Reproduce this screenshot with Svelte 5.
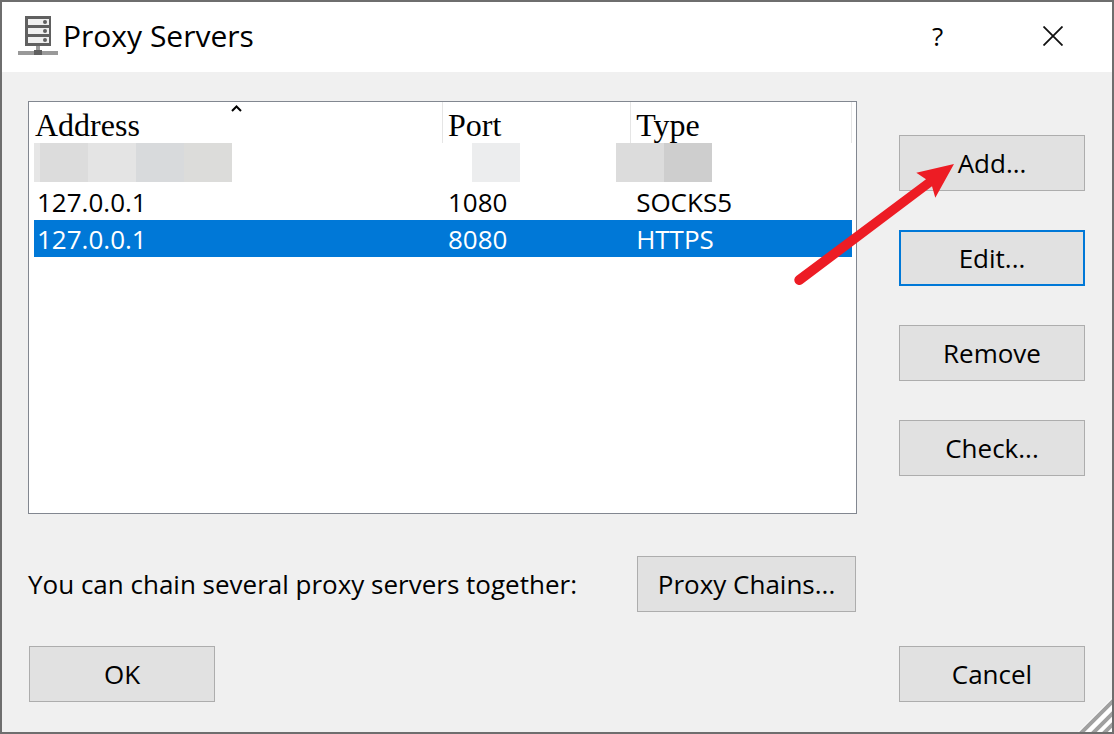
<script>
  const columns = ['Address', 'Port', 'Type'];
  const masked = [
    ['#e6e6e6', '#dcdcdc', '#e4e4e4', '#d8dadc', '#dcdcda'],
    ['#ecedee'],
    ['#dcdcdc', '#cecece'],
  ];
  const servers = [
    ['127.0.0.1', '1080', 'SOCKS5'],
    ['127.0.0.1', '8080', 'HTTPS'],
  ];
  let selected = $state(1);
</script>

<div class="dialog">
  <header>
    <svg class="logo" width="40" height="40" viewBox="0 0 40 40" aria-hidden="true">
      <path fill="#606060" d="M7 0h26v30H7z" />
      <path fill="#f0f0f0" d="M10 3h21v6H10zM10 12h21v6H10zM10 21h21v6H10z" />
      <g fill="#606060">
        <circle cx="27" cy="6" r="2" />
        <circle cx="27" cy="15" r="2" />
        <circle cx="27" cy="24" r="2" />
      </g>
      <path fill="#999" d="M18 30h4v4h-4zM0 35h40v4H0z" />
      <path fill="#606060" d="M16 34h8v5h-8z" />
    </svg>
    <h1>Proxy Servers</h1>
    <button class="caption" aria-label="Help">?</button>
    <button class="caption" aria-label="Close">
      <svg width="20" height="20" viewBox="0 0 20 20" aria-hidden="true">
        <path d="M.5.5l19 19M19.5.5l-19 19" stroke="#111" stroke-width="1.8" />
      </svg>
    </button>
  </header>

  <main>
    <div class="list">
      <table>
        <thead>
          <tr>
            {#each columns as name, i}
              <th>
                {name}
                {#if i === 0}
                  <svg class="sort" width="11" height="7" viewBox="0 0 11 7" aria-hidden="true">
                    <path d="M1 6l4.500-4.500L10 6" fill="none" stroke="#000" stroke-width="2" />
                  </svg>
                {/if}
              </th>
            {/each}
          </tr>
        </thead>
        <tbody>
          <tr class="masked">
            {#each masked as colors}
              <td>
                <div class="blocks">
                  {#each colors as color}<i style:background={color}></i>{/each}
                </div>
              </td>
            {/each}
          </tr>
          {#each servers as row, i}
            <tr class:selected={selected === i} onclick={() => (selected = i)}>
              {#each row as cell}<td>{cell}</td>{/each}
            </tr>
          {/each}
        </tbody>
      </table>
    </div>

    <div class="side">
      <div class="anchor">
        <button class="btn">Add...</button>
        <svg class="arrow" width="162" height="128" viewBox="794 160 162 128" aria-hidden="true">
          <path
            fill="#ed1c24"
            d="M954 164L935.300 197.700L932 186.300L802.300 284A5 5 0 0 1 796.300 276L926 179.300L916.300 172.700Z"
          />
        </svg>
      </div>
      <button class="btn default">Edit...</button>
      <button class="btn">Remove</button>
      <button class="btn">Check...</button>
    </div>

    <div class="chain">
      <span>You can chain several proxy servers together:</span>
      <button class="btn wide">Proxy Chains...</button>
    </div>

    <div class="footer">
      <button class="btn">OK</button>
      <button class="btn">Cancel</button>
    </div>
  </main>

  <svg class="grip" width="34" height="34" viewBox="0 0 34 34" aria-hidden="true">
    <path d="M0 34L34 0V34z" fill="#fff" />
    <g stroke="#a0a0a0" stroke-width="4">
      <path d="M2 36L36 2M14 36L36 14M25 36L36 25" />
    </g>
  </svg>
</div>

<style>
  :global(body) {
    margin: 0;
    background: #f0f0f0;
  }
  .dialog {
    position: relative;
    box-sizing: border-box;
    min-height: 100vh;
    overflow: hidden;
    border: 2px solid #6e6e6e;
    background: #f0f0f0;
    color: #000;
    font: 26px/36px 'Open Sans', Tahoma, sans-serif;
    display: flex;
    flex-direction: column;
  }
  header {
    display: flex;
    align-items: center;
    box-sizing: border-box;
    height: 70px;
    padding: 0 2px 2px 16px;
    background: #fff;
  }
  .logo {
    margin-right: 5px;
  }
  h1 {
    flex: 1;
    margin: 0;
    font: 400 30px/40px 'Open Sans', 'Segoe UI', sans-serif;
  }
  .caption {
    display: grid;
    place-items: center;
    width: 115px;
    height: 68px;
    padding: 0;
    border: 0;
    background: none;
    color: #000;
    font: inherit;
  }
  main {
    flex: 1;
    display: grid;
    grid-template-columns: minmax(0, 1fr) 186px;
    grid-template-rows: 1fr auto auto;
    column-gap: 42px;
    padding: 29px 27px 30px 26px;
  }
  .list {
    box-sizing: border-box;
    min-height: 413px;
    padding: 0 4px 0 5px;
    border: 1px solid #828790;
    background: #fff;
  }
  table {
    width: 100%;
    table-layout: fixed;
    border-collapse: separate;
    border-spacing: 0;
  }
  th,
  td {
    box-sizing: border-box;
    padding: 0 0 0 3px;
    text-align: left;
    font-weight: 400;
    white-space: nowrap;
  }
  th {
    position: relative;
    height: 41px;
    padding: 4px 0 0 1px;
    border-right: 1px solid #e5e5e5;
    font: 32px/36px 'Liberation Serif', serif;
  }
  th:nth-child(1) {
    width: 50%;
  }
  th:nth-child(2) {
    width: 23%;
  }
  th + th,
  td + td {
    padding-left: 5px;
  }
  .sort {
    position: absolute;
    left: 50%;
    top: 3px;
    margin-left: -7px;
  }
  td {
    height: 37px;
  }
  .masked td {
    height: 40px;
    padding: 0;
    vertical-align: top;
  }
  .masked td:nth-child(2) {
    padding-left: 29px;
  }
  .masked td:nth-child(3) .blocks {
    margin-left: -15px;
  }
  .blocks {
    display: flex;
  }
  .blocks i {
    width: 48px;
    height: 39px;
  }
  .blocks i:first-child:nth-last-child(5) {
    width: 6px;
  }
  .selected {
    background: #0078d7;
    color: #fff;
  }
  .side {
    display: flex;
    flex-direction: column;
    gap: 39px;
    padding-top: 34px;
  }
  .anchor {
    position: relative;
    display: flex;
  }
  .arrow {
    position: absolute;
    left: -105px;
    top: 25px;
    pointer-events: none;
  }
  .btn {
    box-sizing: border-box;
    width: 186px;
    height: 56px;
    padding: 0;
    border: 1px solid #adadad;
    background: #e1e1e1;
    color: #000;
    font: inherit;
  }
  .default {
    border: 2px solid #0078d7;
  }
  .wide {
    width: 219px;
  }
  .chain {
    grid-column: 1;
    display: flex;
    align-items: center;
    justify-content: space-between;
    margin-top: 42px;
    padding-right: 1px;
    white-space: nowrap;
  }
  .footer {
    grid-column: 1 / -1;
    display: flex;
    justify-content: space-between;
    margin-top: 34px;
    padding-left: 1px;
  }
  .grip {
    position: absolute;
    right: 0;
    bottom: 0;
  }
</style>
